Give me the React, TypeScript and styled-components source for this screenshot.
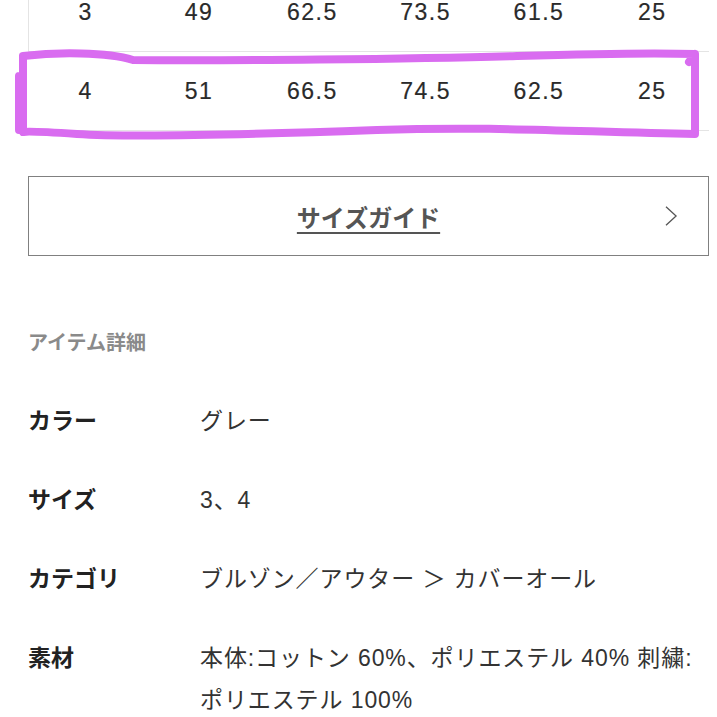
import styled, { createGlobalStyle } from 'styled-components'

const GlobalStyle = createGlobalStyle`
    html, body {
        margin: 0;
        padding: 0;
        background: #ffffff;
    }
    body {
        font-family: 'Liberation Sans', 'Noto Sans CJK JP', sans-serif;
        color: #333333;
        overflow: hidden;
    }
`

const sizeRows = [
    ['3', '49', '62.5', '73.5', '61.5', '25'],
    ['4', '51', '66.5', '74.5', '62.5', '25'],
]

const details = [
    { label: 'カラー', lines: ['グレー'] },
    { label: 'サイズ', lines: ['3、4'] },
    { label: 'カテゴリ', lines: ['ブルゾン／アウター ＞ カバーオール'] },
    {
        label: '素材',
        lines: ['本体:コットン 60%、ポリエステル 40% 刺繍:', 'ポリエステル 100%'],
    },
]

export default function App() {
    return (
        <>
            <GlobalStyle />
            <Page>
                <TableWrap>
                    <SizeTable>
                        {sizeRows.map((row, i) => (
                            <SizeRow key={i} $first={i === 0}>
                                {row.map((cell, j) => (
                                    <Cell key={j}>{cell}</Cell>
                                ))}
                            </SizeRow>
                        ))}
                    </SizeTable>
                    {/* hand drawn marker around the second row */}
                    <Highlight viewBox="0 0 690 100">
                        <path
                            d="M6 10 C 40 6, 90 6, 116 14 C 200 15, 400 13, 500 10 C 600 7, 650 7, 678 8 M 672 16 L 678 8 L 678 88 C 560 86, 480 80, 360 84 C 250 88, 120 92, 60 88 C 30 86, 10 85, 6 86 L 6 10 M 2 30 L 2 84"
                            fill="none"
                            stroke="#d96cf0"
                            strokeWidth="8"
                            strokeLinecap="round"
                            strokeLinejoin="round"
                        />
                    </Highlight>
                </TableWrap>

                <GuideButton>
                    <GuideText>サイズガイド</GuideText>
                    <Chevron viewBox="0 0 16 24">
                        <path d="M2 2 L13 12 L2 22" fill="none" stroke="#555" strokeWidth="1.4" />
                    </Chevron>
                </GuideButton>

                <SectionTitle>アイテム詳細</SectionTitle>

                <DetailList>
                    {details.map((d) => (
                        <DetailRow key={d.label}>
                            <Label>{d.label}</Label>
                            <Value>
                                {d.lines.map((line) => (
                                    <div key={line}>{line}</div>
                                ))}
                            </Value>
                        </DetailRow>
                    ))}
                </DetailList>
            </Page>
        </>
    )
}

const Page = styled.div`
    width: 717px;
    height: 717px;
    padding: 0 8px 0 28px;
    box-sizing: border-box;
    overflow: hidden;
`
const TableWrap = styled.div`
    position: relative;
    margin-top: -27px;
`
const SizeTable = styled.div`
    display: flex;
    flex-direction: column;
`
const SizeRow = styled.div<{ $first?: boolean }>`
    display: grid;
    grid-template-columns: repeat(6, 1fr);
    height: 78px;
    align-items: center;
    border-bottom: 1px solid #e4e4e4;
    border-left: ${(p) => (p.$first ? '1px solid #e4e4e4' : '1px solid transparent')};
`
const Cell = styled.div`
    text-align: center;
    font-size: 23px;
    letter-spacing: 1.5px;
    color: #2a2a2a;
    -webkit-text-stroke: 0.2px #2a2a2a;
`
const Highlight = styled.svg`
    position: absolute;
    left: -11px;
    top: 73px;
    width: 690px;
    height: 100px;
    overflow: visible;
    pointer-events: none;
`
const GuideButton = styled.div`
    position: relative;
    margin-top: 45px;
    height: 80px;
    border: 1px solid #808080;
    box-sizing: border-box;
    display: flex;
    align-items: center;
    justify-content: center;
`
const GuideText = styled.span`
    font-family: 'Noto Sans CJK JP', sans-serif;
    font-weight: 700;
    font-size: 24px;
    color: #555555;
    text-decoration: underline;
    text-underline-offset: 5px;
    text-decoration-thickness: 2px;
`
const Chevron = styled.svg`
    position: absolute;
    right: 29px;
    top: 28px;
    width: 15px;
    height: 22px;
`
const SectionTitle = styled.h2`
    margin: 72px 0 0;
    font-family: 'Noto Sans CJK JP', sans-serif;
    font-size: 20px;
    font-weight: 700;
    color: #8a8a8a;
    line-height: 28px;
`
const DetailList = styled.div`
    margin-top: 42px;
    display: flex;
    flex-direction: column;
    gap: 35px;
`
const DetailRow = styled.div`
    display: grid;
    grid-template-columns: 172px 1fr;
    align-items: baseline;
    line-height: 42px;
`
const Label = styled.div`
    font-family: 'Noto Sans CJK JP', sans-serif;
    font-weight: 700;
    font-size: 23px;
    color: #222222;
`
const Value = styled.div`
    font-family: 'Liberation Sans', 'Noto Sans CJK JP', sans-serif;
    font-size: 23px;
    letter-spacing: 0.9px;
    color: #333333;
    white-space: nowrap;
`
